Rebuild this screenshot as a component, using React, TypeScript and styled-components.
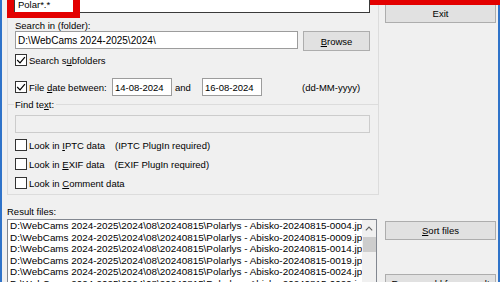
import React from "react";
import styled, { createGlobalStyle } from "styled-components";

const FONT = `"Liberation Sans", Arial, sans-serif`;

const Global = createGlobalStyle`
  html, body { margin: 0; padding: 0; background: #f0f0f0; }
  body { font-family: ${FONT}; }
`;

const Outer = styled.div`
  position: relative;
  width: 500px;
  height: 282px;
  overflow: hidden;
`;

const Win = styled.div`
  box-sizing: border-box;
  width: 500px;
  height: 282px;
  background: #f0f0f0;
  border-left: 2px solid #2f73c9;
  border-right: 2px solid #2f73c9;
  font-family: ${FONT};
  font-size: 9.5px;
  line-height: 11px;
  color: #000;
  display: grid;
  grid-template-columns: 377px 1fr;
`;

const LeftCol = styled.div`
  display: flex;
  flex-direction: column;
  padding-left: 5px;
  min-width: 0;
`;

const RightCol = styled.div`
  display: flex;
  flex-direction: column;
  padding-left: 6px;
`;

const Frame = styled.div`
  box-sizing: border-box;
  width: 372px;
  height: 195px;
  flex: none;
  border: 1px solid #dcdcdc;
  border-top: none;
  padding-left: 7px;
  display: flex;
  flex-direction: column;
`;

const TextBox = styled.div<{ $w: number; $h?: number; $dark?: boolean; $disabled?: boolean; $size?: number }>`
  box-sizing: border-box;
  flex: none;
  width: ${(p) => p.$w}px;
  height: ${(p) => p.$h ?? 18}px;
  border: 1px solid ${(p) => (p.$dark ? "#3a3a3a" : p.$disabled ? "#cccccc" : "#9c9c9c")};
  background: ${(p) => (p.$disabled ? "#f0f0f0" : "#ffffff")};
  padding-left: 2px;
  display: flex;
  align-items: center;
  font-size: ${(p) => p.$size ?? 9.5}px;
  white-space: nowrap;
  overflow: hidden;
`;

const TopInput = styled(TextBox)`
  margin-left: -1px;
  border-top: none;
  align-items: flex-start;
  line-height: 9px;
  padding-left: 3px;
`;

const Label = styled.div<{ $mt: number }>`
  margin-top: ${(p) => p.$mt}px;
  height: 11px;
  white-space: nowrap;
`;

const Row = styled.div<{ $mt: number; $h: number }>`
  display: flex;
  align-items: center;
  margin-top: ${(p) => p.$mt}px;
  height: ${(p) => p.$h}px;
  flex: none;
  white-space: nowrap;
`;

const TopRow = styled(Row)`
  align-items: flex-start;
`;

const Button = styled.div<{ $w: number; $h: number; $mt?: number; $ml?: number }>`
  box-sizing: border-box;
  flex: none;
  width: ${(p) => p.$w}px;
  height: ${(p) => p.$h}px;
  margin-top: ${(p) => p.$mt ?? 0}px;
  margin-left: ${(p) => p.$ml ?? 0}px;
  border: 1px solid #adadad;
  background: #e1e1e1;
  display: flex;
  align-items: center;
  justify-content: center;
  white-space: nowrap;
`;

const Box = styled.span`
  box-sizing: border-box;
  width: 12px;
  height: 12px;
  flex: none;
  border: 1px solid #333333;
  background: #ffffff;
  margin-right: 2px;
  display: inline-flex;
  align-items: center;
  justify-content: center;
`;

const FixedText = styled.span<{ $w?: number; $ml?: number }>`
  flex: none;
  ${(p) => (p.$w ? `width: ${p.$w}px;` : "")}
  margin-left: ${(p) => p.$ml ?? 0}px;
`;

const Mn = styled.span`
  text-decoration: underline;
  text-underline-offset: 1px;
`;

const LegendRow = styled.div`
  display: flex;
  align-items: center;
  margin-top: 3px;
  margin-left: -7px;
  height: 11px;
  flex: none;
`;

const Rule = styled.span<{ $w?: number }>`
  height: 1px;
  background: #dcdcdc;
  ${(p) => (p.$w ? `width: ${p.$w}px; flex: none;` : "flex: 1;")}
`;

const LegendText = styled.span`
  margin: 0 2px 0 1px;
  white-space: nowrap;
`;

const ListBox = styled.div`
  box-sizing: border-box;
  width: 370px;
  height: 72px;
  margin-top: 2px;
  flex: none;
  border: 1px solid #828790;
  background: #ffffff;
  display: flex;
  overflow: hidden;
`;

const Items = styled.div`
  flex: 1;
  min-width: 0;
  overflow: hidden;
  padding-left: 2px;
  font-size: 9.9px;
`;

const Item = styled.div`
  height: 11.6px;
  line-height: 11.6px;
  white-space: nowrap;
`;

const ScrollBar = styled.div`
  width: 14px;
  flex: none;
  background: #f0f0f0;
  display: flex;
  flex-direction: column;
`;

const ArrowBtn = styled.div`
  height: 17px;
  display: flex;
  align-items: center;
  justify-content: center;
`;

const Thumb = styled.div`
  height: 15px;
  margin-left: 1px;
  background: #cdcdcd;
`;

const LeftMarker = styled.div`
  position: absolute;
  left: 7px;
  top: 0;
  width: 73px;
  height: 18px;
  box-sizing: border-box;
  border: 7px solid #e30000;
  border-top: none;
  border-bottom-width: 6px;
`;

const RightMarker = styled.div`
  position: absolute;
  left: 370px;
  top: 0;
  width: 130px;
  height: 5px;
  background: #e30000;
`;

const Check = ({ on }: { on?: boolean }) => (
  <Box>
    {on && (
      <svg width="10" height="10" viewBox="0 0 10 10">
        <path d="M1.2 5 L4 7.8 L8.9 2.2" fill="none" stroke="#000" strokeWidth="1.2" />
      </svg>
    )}
  </Box>
);

const files = ["0004", "0009", "0014", "0019", "0024", "0029"].map(
  (n) => `D:\\WebCams 2024-2025\\2024\\08\\20240815\\Polarlys - Abisko-20240815-${n}.jpg`
);

export default function App() {
  return (
    <>
      <Global />
      <Outer>
        <Win>
          <LeftCol>
            <Frame>
              <TopInput $w={356} $h={13} $dark>
                Polar*.*
              </TopInput>
              <Label $mt={7}>Search in (folder):</Label>
              <TopRow $mt={0} $h={20}>
                <TextBox $w={283} $size={10}>
                  D:\WebCams 2024-2025\2024\
                </TextBox>
                <Button $w={67} $h={20} $ml={5}>
                  <span>
                    <Mn>B</Mn>rowse
                  </span>
                </Button>
              </TopRow>
              <Row $mt={3} $h={12}>
                <Check on />
                <span>
                  Search s<Mn>u</Mn>bfolders
                </span>
              </Row>
              <Row $mt={12} $h={18}>
                <Check on />
                <FixedText $w={83}>
                  File <Mn>d</Mn>ate between:
                </FixedText>
                <TextBox $w={60}>14-08-2024</TextBox>
                <FixedText $w={27} $ml={3}>
                  and
                </FixedText>
                <TextBox $w={60}>16-08-2024</TextBox>
                <FixedText $ml={40}>(dd-MM-yyyy)</FixedText>
              </Row>
              <LegendRow>
                <Rule $w={6} />
                <LegendText>
                  Find te<Mn>x</Mn>t:
                </LegendText>
                <Rule />
              </LegendRow>
              <TopRow $mt={5} $h={18}>
                <TextBox $w={355} $disabled />
              </TopRow>
              <Row $mt={6} $h={12}>
                <Check />
                <span>
                  Look in <Mn>I</Mn>PTC data
                </span>
                <FixedText $ml={10}>(IPTC PlugIn required)</FixedText>
              </Row>
              <Row $mt={7} $h={12}>
                <Check />
                <span>
                  Look in <Mn>E</Mn>XIF data
                </span>
                <FixedText $ml={10}>(EXIF PlugIn required)</FixedText>
              </Row>
              <Row $mt={7} $h={12}>
                <Check />
                <span>
                  Look in <Mn>C</Mn>omment data
                </span>
              </Row>
            </Frame>
            <Label $mt={11}>Result files:</Label>
            <ListBox>
              <Items>
                {files.map((f) => (
                  <Item key={f}>{f}</Item>
                ))}
              </Items>
              <ScrollBar>
                <ArrowBtn>
                  <svg width="8" height="5" viewBox="0 0 8 5">
                    <polyline points="0.8,4.3 4,1.1 7.2,4.3" fill="none" stroke="#606060" strokeWidth="1.1" />
                  </svg>
                </ArrowBtn>
                <Thumb />
              </ScrollBar>
            </ListBox>
          </LeftCol>
          <RightCol>
            <Button $w={111} $h={20} $mt={3}>
              Exit
            </Button>
            <Button $w={111} $h={19} $mt={198}>
              <span>
                <Mn>S</Mn>ort files
              </span>
            </Button>
            <Button $w={111} $h={19} $mt={34}>
              Remove old from result
            </Button>
          </RightCol>
        </Win>
        <LeftMarker />
        <RightMarker />
      </Outer>
    </>
  );
}
